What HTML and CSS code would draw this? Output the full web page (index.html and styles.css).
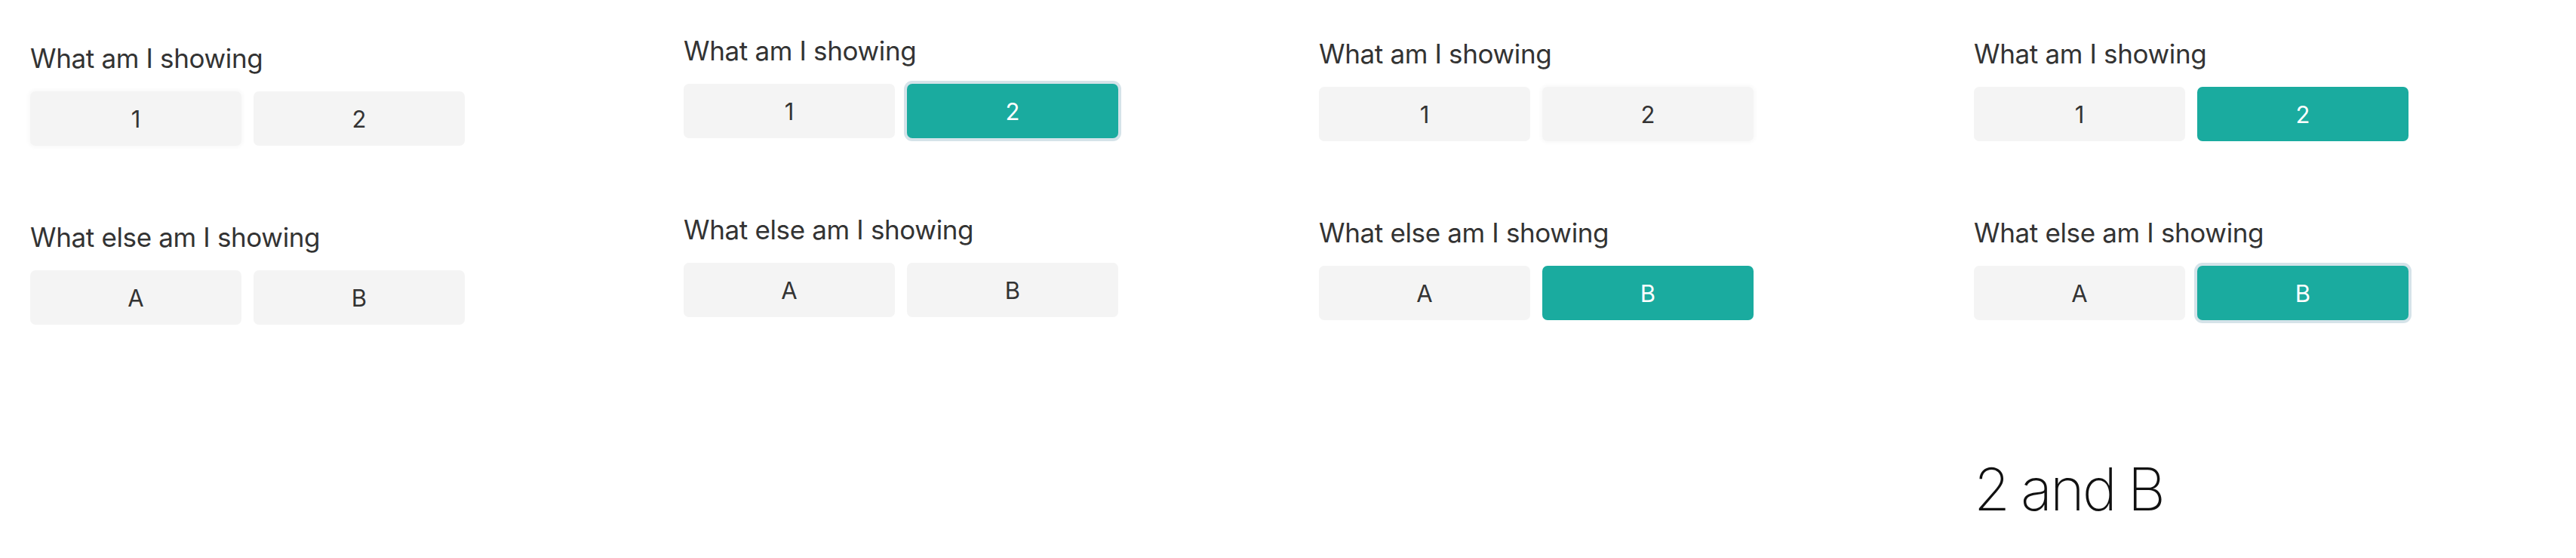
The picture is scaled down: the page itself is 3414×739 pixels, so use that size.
FILE: index.html
```html
<!DOCTYPE html>
<html lang="en">
<head>
<meta charset="utf-8">
<title>Toggle groups</title>
<link rel="stylesheet" href="styles.css">
</head>
<body>
<main class="panels">
  <section class="panel panel--one">
    <div class="group">
      <p class="label">What am I showing</p>
      <div class="row">
        <button class="btn btn--halo">1</button>
        <button class="btn">2</button>
      </div>
    </div>
    <div class="group">
      <p class="label">What else am I showing</p>
      <div class="row">
        <button class="btn">A</button>
        <button class="btn">B</button>
      </div>
    </div>
  </section>

  <section class="panel panel--two">
    <div class="group">
      <p class="label">What am I showing</p>
      <div class="row">
        <button class="btn">1</button>
        <button class="btn btn--on btn--focus">2</button>
      </div>
    </div>
    <div class="group">
      <p class="label">What else am I showing</p>
      <div class="row">
        <button class="btn">A</button>
        <button class="btn">B</button>
      </div>
    </div>
  </section>

  <section class="panel panel--three">
    <div class="group">
      <p class="label">What am I showing</p>
      <div class="row">
        <button class="btn">1</button>
        <button class="btn btn--halo">2</button>
      </div>
    </div>
    <div class="group">
      <p class="label">What else am I showing</p>
      <div class="row">
        <button class="btn">A</button>
        <button class="btn btn--on">B</button>
      </div>
    </div>
  </section>

  <section class="panel panel--four">
    <div class="group">
      <p class="label">What am I showing</p>
      <div class="row">
        <button class="btn">1</button>
        <button class="btn btn--on">2</button>
      </div>
    </div>
    <div class="group">
      <p class="label">What else am I showing</p>
      <div class="row">
        <button class="btn">A</button>
        <button class="btn btn--on btn--focus">B</button>
      </div>
    </div>
    <p class="result">2 and B</p>
  </section>
</main>
</body>
</html>
```

FILE: styles.css
```css
html, body {
  margin: 0;
  padding: 0;
  background: #ffffff;
}

body {
  width: 3414px;
  height: 739px;
  overflow: hidden;
  font-family: Inter, "Noto Sans", "Liberation Sans", sans-serif;
  color: #333333;
}

.panels {
  display: flex;
  align-items: flex-start;
  padding-left: 40px;
}

.panel {
  display: flex;
  flex-direction: column;
}

.panel--one { width: 866px; padding-top: 55px; }
.panel--two { width: 842px; padding-top: 45px; }
.panel--three { width: 868px; padding-top: 49px; }
.panel--four { padding-top: 49px; }

.group + .group {
  margin-top: 99px;
}

.label {
  margin: 0 0 22px;
  font-size: 35px;
  line-height: 44px;
  font-weight: 400;
  letter-spacing: -0.35px;
  color: #333333;
}

.row {
  display: flex;
  gap: 16px;
}

.btn {
  width: 280px;
  height: 72px;
  padding: 0;
  border: 0;
  border-radius: 7px;
  background: #f4f4f4;
  color: #333333;
  font-family: inherit;
  font-size: 31px;
  font-weight: 400;
  line-height: 1;
  display: flex;
  align-items: center;
  justify-content: center;
}

.btn--on {
  background: #1aab9f;
  color: #ffffff;
}

.btn--focus {
  box-shadow: 0 0 0 4px #d5e3e9;
}

.btn--halo {
  box-shadow: 0 0 4px 3px rgba(0, 0, 0, 0.025);
}

.result {
  margin: 185px 0 0;
  font-size: 78px;
  line-height: 78px;
  font-weight: 200;
  letter-spacing: -3px;
  word-spacing: -2px;
  color: #111111;
}
```
